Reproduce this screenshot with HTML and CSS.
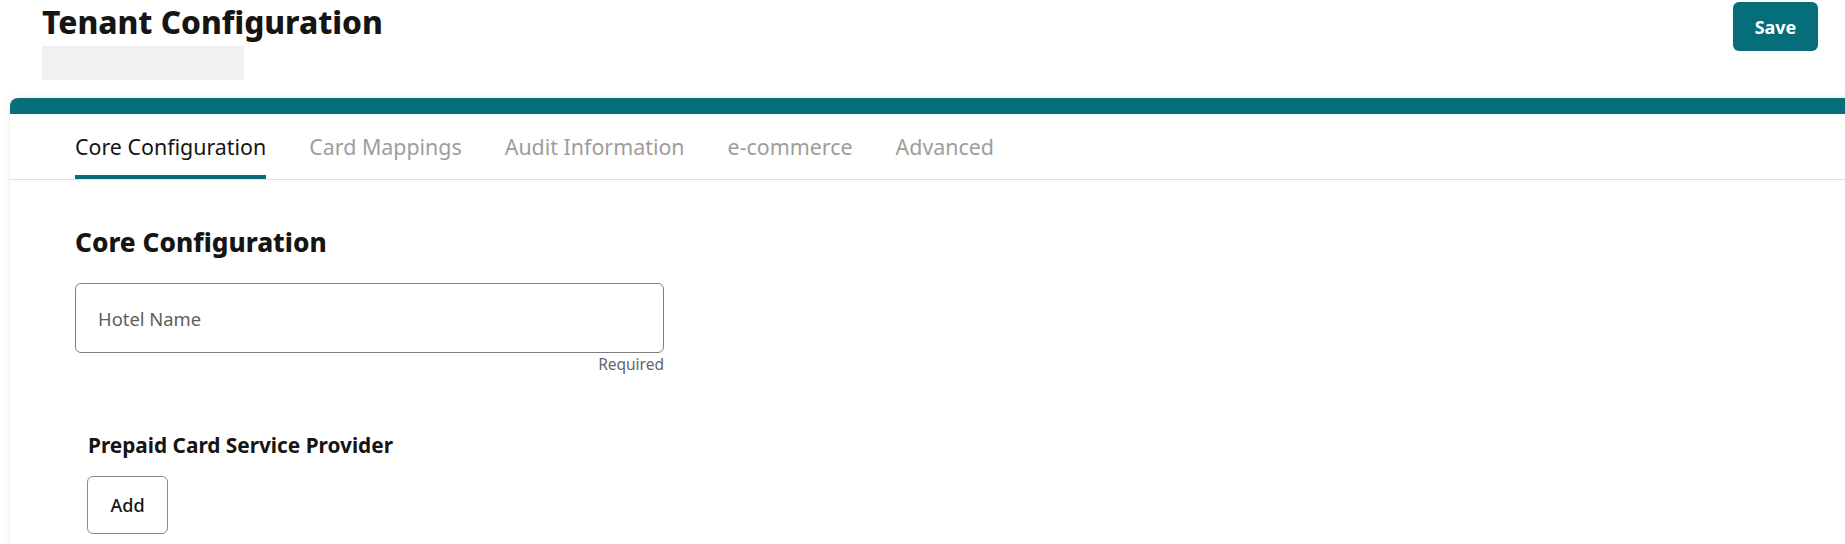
FILE: index.html
```html
<!DOCTYPE html>
<html lang="en">
<head>
<meta charset="utf-8">
<title>Tenant Configuration</title>
<link rel="stylesheet" href="styles.css">
</head>
<body>
<header class="page-header">
  <div class="title-block">
    <h1 class="page-title">Tenant Configuration</h1>
    <div class="subtitle-placeholder"></div>
  </div>
  <button class="btn-save" type="button">Save</button>
</header>
<main class="card">
  <div class="card-bar"></div>
  <nav class="tabs">
    <div class="tab tab-active">Core Configuration</div>
    <div class="tab">Card Mappings</div>
    <div class="tab">Audit Information</div>
    <div class="tab">e-commerce</div>
    <div class="tab">Advanced</div>
  </nav>
  <section class="content">
    <h2 class="section-title">Core Configuration</h2>
    <div class="field">
      <div class="input-box"><span class="input-label">Hotel Name</span></div>
      <div class="field-hint">Required</div>
    </div>
    <h3 class="sub-title">Prepaid Card Service Provider</h3>
    <button class="btn-add" type="button">Add</button>
  </section>
</main>
</body>
</html>
```
FILE: styles.css
```css
html, body {
  margin: 0;
  padding: 0;
  background: #ffffff;
  font-family: "Noto Sans", "Open Sans", sans-serif;
  color: #161513;
  overflow: hidden;
}

.page-header {
  display: flex;
  justify-content: space-between;
  align-items: flex-start;
  padding: 2px 27px 0 42px;
  height: 96px;
}

.title-block {
  display: flex;
  flex-direction: column;
}

.page-title {
  margin: 0;
  font-size: 31.6px;
  line-height: 40px;
  font-weight: 800;
  color: #161513;
}

.subtitle-placeholder {
  margin-top: 4px;
  width: 202px;
  height: 34px;
  background: #f1f1f1;
}

.btn-save {
  width: 85px;
  height: 49px;
  border: none;
  border-radius: 6px;
  background: #066e78;
  color: #ffffff;
  font-family: inherit;
  font-size: 18px;
  font-weight: 700;
  cursor: pointer;
}

.card {
  margin-left: 10px;
  background: #ffffff;
  border-top-left-radius: 8px;
  box-shadow: 0 0 10px rgba(0, 0, 0, 0.09);
  min-height: 460px;
}

.card-bar {
  height: 16px;
  background: #066e78;
  border-top-left-radius: 8px;
}

.tabs {
  display: flex;
  gap: 43px;
  padding-left: 65px;
  height: 65px;
  border-bottom: 1px solid #e0e0e0;
}

.tab {
  display: flex;
  align-items: center;
  font-size: 21.4px;
  color: #9f9d9a;
  white-space: nowrap;
}

.tab-active {
  color: #161513;
  box-shadow: inset 0 -4px 0 #066e78;
}

.content {
  padding: 46px 0 0 65px;
}

.section-title {
  margin: 0;
  font-size: 26.2px;
  line-height: 32px;
  font-weight: 800;
}

.field {
  margin-top: 25px;
  width: 589px;
}

.input-box {
  box-sizing: border-box;
  height: 70px;
  border: 1px solid #7f7f7f;
  border-radius: 6px;
  display: flex;
  align-items: center;
  padding-left: 22px;
}

.input-label {
  font-size: 18.4px;
  color: #5f5c59;
}

.field-hint {
  margin-top: 2px;
  text-align: right;
  font-size: 15.5px;
  line-height: 18px;
  color: #5f6670;
}

.sub-title {
  margin: 58px 0 0 13px;
  font-size: 20.8px;
  line-height: 28px;
  font-weight: 700;
}

.btn-add {
  display: block;
  margin: 17px 0 0 12px;
  width: 81px;
  height: 58px;
  border: 1px solid #8a8a8a;
  border-radius: 6px;
  background: #ffffff;
  color: #161513;
  font-family: inherit;
  font-size: 18px;
  font-weight: 500;
}
```
